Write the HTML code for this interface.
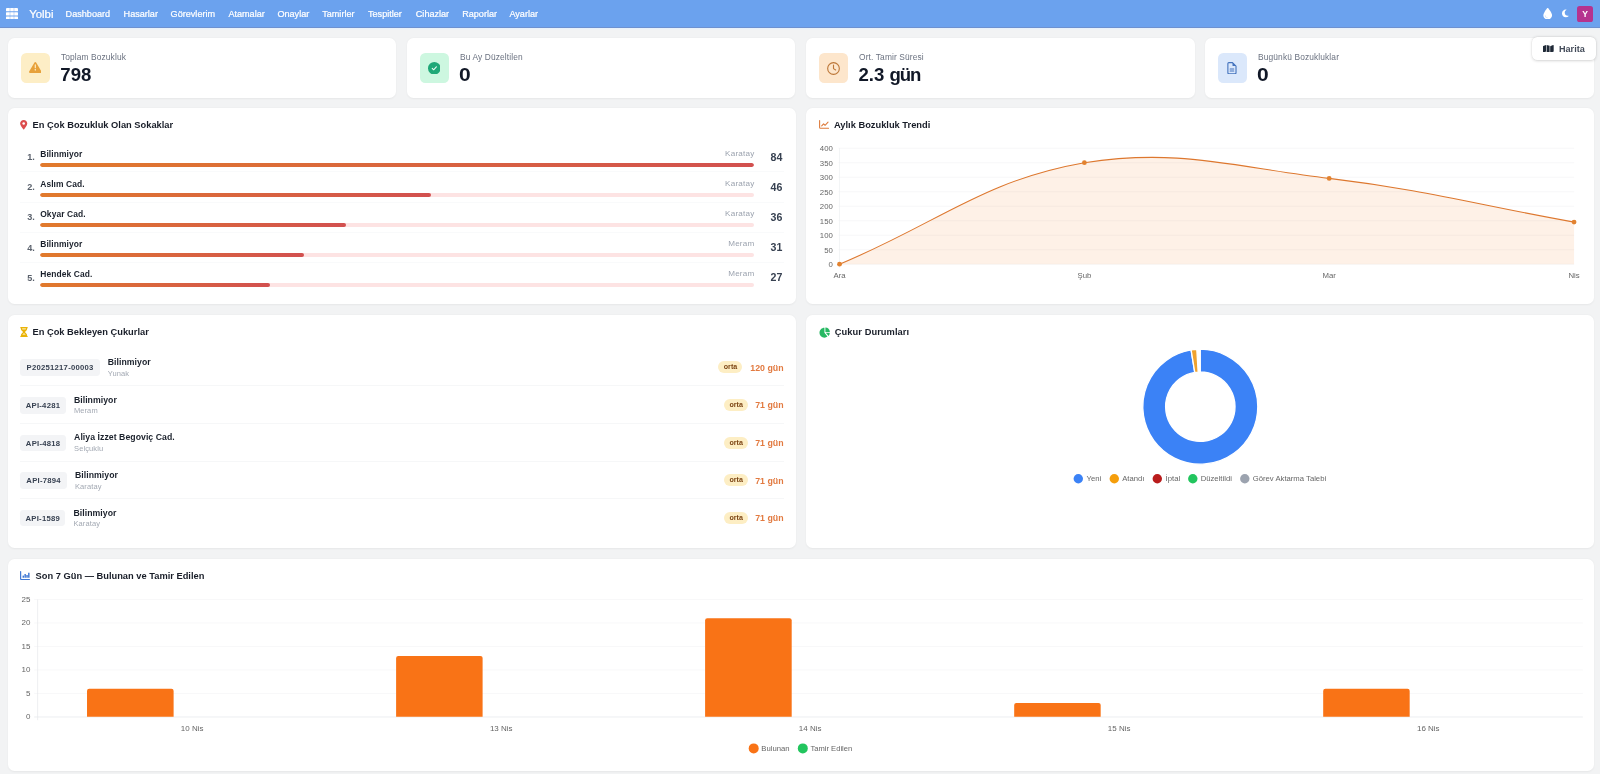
<!DOCTYPE html>
<html lang="tr">
<head>
<meta charset="utf-8">
<title>Yolbi Dashboard</title>
<style>
*{box-sizing:border-box;margin:0;padding:0}
html,body{width:1600px;height:774px;overflow:hidden}
body{background:#f2f3f4;font-family:"Liberation Sans",sans-serif;color:#1f2937;position:relative}
.abs{position:absolute}
/* NAV */
#nav{position:absolute;left:0;top:0;width:1600px;height:28px;background:#6ba2ee;border-bottom:1px solid #6d91d0}
#nav:after{content:'';position:absolute;left:0;top:28px;width:1600px;height:2.4px;background:linear-gradient(#e4f1fd,#f2f3f4)}
#nav .it{-webkit-text-stroke:.22px #fff;position:absolute;top:1px;height:27.5px;line-height:27.5px;color:#fff;font-size:9.1px;white-space:nowrap;letter-spacing:0}
#nav .brand{font-size:11.4px}
/* CARDS */
.card{position:absolute;background:#fff;border-radius:6.7px;box-shadow:0 0.7px 2px rgba(0,0,0,.05)}
.ib{position:absolute;left:12.6px;top:15.4px;width:29.3px;height:29.3px;border-radius:5.3px}
.sl{position:absolute;left:52.9px;top:13.6px;font-size:8.4px;color:#6b7280;white-space:nowrap;letter-spacing:.12px}
.sv{position:absolute;left:52.3px;top:26.3px;font-size:18.6px;font-weight:700;color:#111827;white-space:nowrap;line-height:21px}
.ttl{position:absolute;font-size:9.3px;font-weight:700;color:#181d28;white-space:nowrap;line-height:12px}

.srow{position:absolute;left:12.4px;width:763.2px;height:30.1px;border-bottom:.7px solid #f9fafb}
.srow:last-child{border-bottom:none}
.sn{position:absolute;left:6.9px;top:9.9px;font-size:9.1px;font-weight:700;color:#5a616c;line-height:10px}
.snm{position:absolute;left:19.8px;top:6.7px;font-size:8.45px;font-weight:700;color:#1a202b;line-height:10px;white-space:nowrap;letter-spacing:.1px}
.sd{position:absolute;right:29.2px;top:6.4px;font-size:8.1px;color:#9ca3af;line-height:10px;letter-spacing:.2px}
.sc{position:absolute;right:1.2px;top:8.2px;font-size:10.6px;font-weight:700;color:#374151;line-height:12px}
.trk{position:absolute;left:19.8px;top:20.5px;width:714.2px;height:4px;border-radius:2px;background:#fde3e3;overflow:hidden}
.fil{height:4px;border-radius:2px;background:linear-gradient(90deg,#e17a2c,#d2504f)}

.wrow{position:absolute;left:12.4px;width:763.2px;height:37.65px;border-bottom:.7px solid #f6f7f8}
.wrow:last-child{border-bottom:none}
.wb{position:absolute;left:0;top:10.9px;height:16.4px;line-height:18px;border-radius:3.4px;background:#f3f4f6;color:#374151;font-size:7.7px;font-weight:700;text-align:center;letter-spacing:.25px;white-space:nowrap}
.wn{position:absolute;top:8.6px;font-size:8.7px;font-weight:700;color:#1a202b;line-height:10px;white-space:nowrap;letter-spacing:.05px}
.ws{position:absolute;top:20.1px;font-size:7.5px;color:#a3a9b3;line-height:9px;white-space:nowrap;letter-spacing:.1px}
.wp{position:absolute;top:12.7px;width:24px;height:12.1px;line-height:12.5px;border-radius:6px;background:#fdeec4;color:#7c4514;font-size:7.1px;font-weight:700;text-align:center}
.wd{position:absolute;right:0;top:14px;font-size:8.8px;font-weight:700;color:#e27a40;line-height:11px;white-space:nowrap}
</style>
</head>
<body>
<div id="root" style="position:absolute;left:0;top:0;width:1600px;height:774px;will-change:transform">
<!-- NAV -->
<div id="nav">
  <svg class="abs" style="left:6px;top:7.8px" width="12" height="11.6" viewBox="0 0 12 11.6"><g fill="#fff"><rect x="0" y="0" width="12" height="3.2" rx=".5"/><rect x="0" y="4.2" width="12" height="3.2" rx=".5"/><rect x="0" y="8.4" width="12" height="3.2" rx=".5"/></g><g stroke="#6aa1ed" stroke-width=".7" opacity=".55"><line x1="4" y1="0" x2="4" y2="11.6"/><line x1="8" y1="0" x2="8" y2="11.6"/></g></svg>
  <span class="it brand" style="left:29.2px">Yolbi</span>
  <span class="it" style="left:65.6px">Dashboard</span>
  <span class="it" style="left:123.6px">Hasarlar</span>
  <span class="it" style="left:170.6px">Görevlerim</span>
  <span class="it" style="left:228.4px">Atamalar</span>
  <span class="it" style="left:277.4px">Onaylar</span>
  <span class="it" style="left:322.2px">Tamirler</span>
  <span class="it" style="left:368px">Tespitler</span>
  <span class="it" style="left:415.8px">Cihazlar</span>
  <span class="it" style="left:462.2px">Raporlar</span>
  <span class="it" style="left:509.4px">Ayarlar</span>
  <!-- droplet -->
  <svg class="abs" style="left:1543px;top:7.6px" width="9.4" height="11.6" viewBox="0 0 384 512"><path fill="#fff" d="M192 512C86 512 0 426 0 320C0 228.800 130.200 57.700 166.600 11.700C172.600 4.200 181.500 0 191.100 0h1.800c9.600 0 18.500 4.200 24.500 11.700C253.800 57.700 384 228.800 384 320c0 106-86 192-192 192z"/><path fill="#6aa1ed" opacity=".35" d="M96 336c0-8.800-7.200-16-16-16s-16 7.200-16 16c0 61.900 50.100 112 112 112c8.800 0 16-7.200 16-16s-7.200-16-16-16c-44.200 0-80-35.800-80-80z"/></svg>
  <!-- moon -->
  <svg class="abs" style="left:1561.4px;top:9.4px" width="8.6" height="8.8" viewBox="0 0 384 512"><path fill="#fff" d="M223.500 32C100 32 0 132.300 0 256S100 480 223.500 480c60.600 0 115.500-24.200 155.800-63.400c5-4.900 6.300-12.500 3.100-18.700s-10.100-9.700-17-8.500c-9.800 1.700-19.800 2.600-30.100 2.600c-96.900 0-175.500-78.800-175.500-176c0-65.800 36-123.100 89.300-153.300c6.100-3.500 9.200-10.500 7.700-17.300s-7.300-11.900-14.300-12.500c-6.300-.5-12.600-.8-19-.8z"/></svg>
  <div class="abs" style="left:1577px;top:6px;width:16px;height:16px;border-radius:2.6px;background:#b5338f;color:#fff;font-size:8.6px;font-weight:700;text-align:center;line-height:16.4px">Y</div>
</div>

<!-- STAT CARDS -->
<div class="card" style="left:8px;top:38px;width:388.4px;height:60px">
  <div class="ib" style="background:#fdeec6"></div>
  <svg class="abs" style="left:20.7px;top:24.4px" width="12.6" height="11" viewBox="0 0 512 448"><path fill="#e7a13a" d="M256 0c14.200 0 27.300 7.500 34.500 19.800l216 368c7.300 12.400 7.300 27.700 .2 40.100S486.300 448 472 448H40c-14.300 0-27.600-7.700-34.700-20.100s-7-27.800 .2-40.100l216-368C228.700 7.500 241.800 0 256 0z"/><path fill="#fdeec6" d="M256 96c13.300 0 24 10.700 24 24V232c0 13.300-10.700 24-24 24s-24-10.700-24-24V120c0-13.300 10.700-24 24-24zm32 224a32 32 0 1 1-64 0 32 32 0 1 1 64 0z"/></svg>
  <div class="sl">Toplam Bozukluk</div>
  <div class="sv">798</div>
</div>
<div class="card" style="left:407.1px;top:38px;width:388.4px;height:60px">
  <div class="ib" style="background:#cdf7e0"></div>
  <svg class="abs" style="left:20.6px;top:23.9px" width="12.6" height="12.6" viewBox="0 0 512 512"><circle cx="256" cy="256" r="256" fill="#1fa877"/><path fill="none" stroke="#e9fbf2" stroke-width="44" stroke-linecap="round" stroke-linejoin="round" d="M172 262l56 54 112-122"/></svg>
  <div class="sl">Bu Ay Düzeltilen</div>
  <div class="sv"><span style="display:inline-block;transform:scaleX(1.13);transform-origin:0 50%">0</span></div>
</div>
<div class="card" style="left:806.2px;top:38px;width:388.4px;height:60px">
  <div class="ib" style="background:#fde6cc"></div>
  <svg class="abs" style="left:20.9px;top:23.5px" width="13" height="13" viewBox="0 0 512 512"><circle cx="256" cy="256" r="230" fill="none" stroke="#bd7738" stroke-width="44"/><path fill="none" stroke="#bd7738" stroke-width="44" stroke-linecap="round" stroke-linejoin="round" d="M256 120v140l84 54"/></svg>
  <div class="sl">Ort. Tamir Süresi</div>
  <div class="sv">2.3 <span style="letter-spacing:-1.1px">gün</span></div>
</div>
<div class="card" style="left:1205.2px;top:38px;width:388.4px;height:60px">
  <div class="ib" style="background:#dbe8fb"></div>
  <svg class="abs" style="left:22.3px;top:24px" width="9.9" height="12.4" viewBox="0 0 384 512"><path fill="none" stroke="#4473bd" stroke-width="46" stroke-linejoin="round" d="M64 24h150l146 146v278c0 22-18 40-40 40H64c-22 0-40-18-40-40V64c0-22 18-40 40-40z"/><path fill="#4473bd" d="M214 24l146 146H238c-13 0-24-11-24-24z"/><path fill="none" stroke="#4473bd" stroke-width="42" stroke-linecap="round" d="M116 290h152M116 376h152"/></svg>
  <div class="sl">Bugünkü Bozukluklar</div>
  <div class="sv"><span style="display:inline-block;transform:scaleX(1.13);transform-origin:0 50%">0</span></div>
</div>

<!-- HARITA BUTTON -->
<div class="abs" style="left:1531.8px;top:36.6px;width:64.4px;height:23.6px;background:#fff;border-radius:5.3px;box-shadow:0 0.7px 3px rgba(0,0,0,.16),0 0 0 .5px rgba(0,0,0,.04)">
  <svg class="abs" style="left:11.4px;top:8px" width="10.8" height="7.8" viewBox="0 0 576 416"><path fill="#1f2937" d="M384 412.700V64.600l152.600-61c15.800-6.300 32.900 5.300 32.900 22.300V334.700c0 9.800-6 18.600-15.100 22.300L384 412.700zM15.100 47.300L160 -0.700V347.400L32.900 412.300C17.100 418.600 0 407 0 390V69.600c0-9.800 6-18.600 15.100-22.300zM352 416.600l-160-45.700V-0.600l160 45.700V416.600z"/></svg>
  <span class="abs" style="left:27.2px;top:0;line-height:24.2px;font-size:9.1px;font-weight:700;color:#434b59">Harita</span>
</div>

<!-- ROW 2 LEFT -->
<div class="card" id="p1" style="left:8px;top:108px;width:788.1px;height:196.2px">
  <svg class="abs" style="left:12.2px;top:12.4px" width="7.4" height="9.6" viewBox="0 0 384 512"><path fill="#dc4c4c" d="M215.700 499.200C267 435 384 279.400 384 192C384 86 298 0 192 0S0 86 0 192c0 87.400 117 243 168.300 307.200c12.300 15.300 35.100 15.300 47.400 0z"/><circle cx="192" cy="192" r="68" fill="#fff"/></svg>
  <div class="ttl" style="left:24.6px;top:10.8px">En Çok Bozukluk Olan Sokaklar</div>
  <div class="srow" style="top:34.4px"><span class="sn">1.</span><span class="snm">Bilinmiyor</span><span class="sd">Karatay</span><span class="sc">84</span><div class="trk"><div class="fil" style="width:100.00%"></div></div></div>
  <div class="srow" style="top:64.5px"><span class="sn">2.</span><span class="snm">Aslım Cad.</span><span class="sd">Karatay</span><span class="sc">46</span><div class="trk"><div class="fil" style="width:54.76%"></div></div></div>
  <div class="srow" style="top:94.6px"><span class="sn">3.</span><span class="snm">Okyar Cad.</span><span class="sd">Karatay</span><span class="sc">36</span><div class="trk"><div class="fil" style="width:42.86%"></div></div></div>
  <div class="srow" style="top:124.7px"><span class="sn">4.</span><span class="snm">Bilinmiyor</span><span class="sd">Meram</span><span class="sc">31</span><div class="trk"><div class="fil" style="width:36.90%"></div></div></div>
  <div class="srow" style="top:154.8px"><span class="sn">5.</span><span class="snm">Hendek Cad.</span><span class="sd">Meram</span><span class="sc">27</span><div class="trk"><div class="fil" style="width:32.14%"></div></div></div>
</div>
<!-- ROW 2 RIGHT -->
<div class="card" id="p2" style="left:806.2px;top:108px;width:787.4px;height:196.2px">
  <svg class="abs" style="left:12.9px;top:12.4px" width="10.2" height="8.9" viewBox="0 0 512 448"><path fill="none" stroke="#dd7a3a" stroke-width="54" stroke-linecap="round" stroke-linejoin="round" d="M30 30v350c0 22 18 38 40 38h412"/><path fill="none" stroke="#dd7a3a" stroke-width="54" stroke-linecap="round" stroke-linejoin="round" d="M135 300l95-105 75 70 150-160"/></svg>
  <div class="ttl" style="left:27.8px;top:10.8px">Aylık Bozukluk Trendi</div>
  <svg class="abs" style="left:0;top:0" width="787.4" height="196.2" viewBox="806.2 108 787.4 196.2" font-family="Liberation Sans, sans-serif" font-size="7.8" fill="#666">
    <g stroke="#f3f4f6" stroke-width=".7"><line x1="838.7" y1="264.2" x2="1574.3" y2="264.2"/><line x1="838.7" y1="249.7" x2="1574.3" y2="249.7"/><line x1="838.7" y1="235.2" x2="1574.3" y2="235.2"/><line x1="838.7" y1="220.7" x2="1574.3" y2="220.7"/><line x1="838.7" y1="206.2" x2="1574.3" y2="206.2"/><line x1="838.7" y1="191.7" x2="1574.3" y2="191.7"/><line x1="838.7" y1="177.2" x2="1574.3" y2="177.2"/><line x1="838.7" y1="162.7" x2="1574.3" y2="162.7"/><line x1="838.7" y1="148.2" x2="1574.3" y2="148.2"/></g>
    <g stroke="#eef0f2" stroke-width=".7"><line x1="839.7" y1="148.2" x2="839.7" y2="267.6"/></g>
    <path d="M839.7,264.2 C937.6,223.6 982.8,180.5 1084.6,162.7 C1178.7,148.2 1232.2,166.6 1329.4,178.4 C1428.1,190.3 1476.4,204.6 1574.3,222.1 L1574.3,264.2 L839.7,264.2 Z" fill="#f97316" fill-opacity=".1"/>
    <path d="M839.7,264.2 C937.6,223.6 982.8,180.5 1084.6,162.7 C1178.7,148.2 1232.2,166.6 1329.4,178.4 C1428.1,190.3 1476.4,204.6 1574.3,222.1" fill="none" stroke="#dd772e" stroke-width="1.1"/>
    <g fill="#e2822f"><circle cx="839.7" cy="264.2" r="2.4"/><circle cx="1084.6" cy="162.7" r="2.4"/><circle cx="1329.4" cy="178.4" r="2.4"/><circle cx="1574.3" cy="222.1" r="2.4"/></g>
    <text x="833" y="267.1" text-anchor="end">0</text><text x="833" y="252.6" text-anchor="end">50</text><text x="833" y="238.1" text-anchor="end">100</text><text x="833" y="223.6" text-anchor="end">150</text><text x="833" y="209.1" text-anchor="end">200</text><text x="833" y="194.6" text-anchor="end">250</text><text x="833" y="180.1" text-anchor="end">300</text><text x="833" y="165.6" text-anchor="end">350</text><text x="833" y="151.1" text-anchor="end">400</text>
    <text x="839.7" y="278.2" text-anchor="middle">Ara</text><text x="1084.6" y="278.2" text-anchor="middle">Şub</text><text x="1329.4" y="278.2" text-anchor="middle">Mar</text><text x="1574.3" y="278.2" text-anchor="middle">Nis</text>
  </svg>
</div>
<!-- ROW 3 LEFT -->
<div class="card" id="p3" style="left:8px;top:315.4px;width:788.1px;height:232.8px">
  <svg class="abs" style="left:11.8px;top:11.6px" width="8" height="10.2" viewBox="0 0 384 512"><path fill="#eab308" d="M32 0C14.300 0 0 14.300 0 32S14.300 64 32 64V75c0 42.400 16.900 83.100 46.900 113.100L146.700 256 78.900 323.900C48.900 353.900 32 394.600 32 437v11c-17.700 0-32 14.300-32 32s14.300 32 32 32H352c17.700 0 32-14.300 32-32s-14.300-32-32-32V437c0-42.400-16.900-83.100-46.900-113.100L237.300 256l67.900-67.900c30-30 46.900-70.700 46.900-113.100V64c17.700 0 32-14.300 32-32s-14.300-32-32-32H32z"/><path fill="#fdf3c4" d="M96 75V64H288V75c0 19-5.600 37.400-16 53H112c-10.300-15.600-16-34-16-53zm16 309c3.500-5.300 7.600-10.300 12.100-14.900L192 301.300l67.900 67.900c4.600 4.600 8.600 9.600 12.100 14.900H112z" opacity=".85"/></svg>
  <div class="ttl" style="left:24.5px;top:10.6px">En Çok Bekleyen Çukurlar</div>
  <div class="wrow" style="top:33.20px"><span class="wb" style="width:79.4px">P20251217-00003</span><span class="wn" style="left:87.3px">Bilinmiyor</span><span class="ws" style="left:87.3px">Yunak</span><span class="wp" style="left:698.1px">orta</span><span class="wd">120 gün</span></div>
  <div class="wrow" style="top:70.85px"><span class="wb" style="width:45.2px">API-4281</span><span class="wn" style="left:53.5px">Bilinmiyor</span><span class="ws" style="left:53.5px">Meram</span><span class="wp" style="left:703.8px">orta</span><span class="wd">71 gün</span></div>
  <div class="wrow" style="top:108.50px"><span class="wb" style="width:45.4px">API-4818</span><span class="wn" style="left:53.7px">Aliya İzzet Begoviç Cad.</span><span class="ws" style="left:53.7px">Selçuklu</span><span class="wp" style="left:703.8px">orta</span><span class="wd">71 gün</span></div>
  <div class="wrow" style="top:146.15px"><span class="wb" style="width:46.4px">API-7894</span><span class="wn" style="left:54.6px">Bilinmiyor</span><span class="ws" style="left:54.6px">Karatay</span><span class="wp" style="left:703.8px">orta</span><span class="wd">71 gün</span></div>
  <div class="wrow" style="top:183.80px"><span class="wb" style="width:44.8px">API-1589</span><span class="wn" style="left:53.1px">Bilinmiyor</span><span class="ws" style="left:53.1px">Karatay</span><span class="wp" style="left:703.8px">orta</span><span class="wd">71 gün</span></div>
</div>
<!-- ROW 3 RIGHT -->
<div class="card" id="p4" style="left:806.2px;top:315.4px;width:787.4px;height:232.8px">
  <svg class="abs" style="left:12.6px;top:11.4px" width="11.2" height="11.2" viewBox="0 0 576 576"><path fill="#26b862" d="M280 40C140 40 26 154 26 294s114 254 254 254c60 0 115-21 158-55L280 294V40z"/><path fill="#26b862" d="M328 20v232h232C560 124 456 20 328 20z"/><path fill="#26b862" d="M350 300h206c0 62-24 118-63 160L350 300z"/></svg>
  <div class="ttl" style="left:28.6px;top:10.6px;letter-spacing:.07px">Çukur Durumları</div>
  <svg class="abs" style="left:0;top:0" width="787.4" height="232.8" viewBox="806.2 315.4 787.4 232.8" font-family="Liberation Sans, sans-serif" font-size="7.7" fill="#666">
    <g stroke="#fff" stroke-width="1.33" stroke-linejoin="round">
      <path d="M1200.50,349.60 A57.5,57.5 0 1 1 1191.31,350.34 L1194.95,372.85 A34.7,34.7 0 1 0 1200.50,372.40 Z" fill="#3b82f6"/>
      <path d="M1191.31,350.34 A57.5,57.5 0 0 1 1196.99,349.71 L1198.38,372.46 A34.7,34.7 0 0 0 1194.95,372.85 Z" fill="#f0a22e"/>
    </g>
    <circle cx="1078.5" cy="479.2" r="4.7" fill="#3b82f6"/><text x="1086.8" y="481.8">Yeni</text><circle cx="1114.5" cy="479.2" r="4.7" fill="#f59e0b"/><text x="1122.4" y="481.8">Atandı</text><circle cx="1157.5" cy="479.2" r="4.7" fill="#b91c1c"/><text x="1165.8" y="481.8">İptal</text><circle cx="1193" cy="479.2" r="4.7" fill="#22c55e"/><text x="1200.9" y="481.8">Düzeltildi</text><circle cx="1245" cy="479.2" r="4.7" fill="#9ca3af"/><text x="1253" y="481.8">Görev Aktarma Talebi</text>
  </svg>
</div>
<!-- ROW 4 -->
<div class="card" id="p5" style="left:8px;top:559.2px;width:1585.6px;height:211.6px">
  <svg class="abs" style="left:12px;top:11.9px" width="10" height="9.2" viewBox="0 0 512 470"><path fill="none" stroke="#3d76d3" stroke-width="60" stroke-linecap="round" stroke-linejoin="round" d="M32 30v370c0 22 18 38 40 38h410"/><g stroke="#3d76d3" stroke-width="74" stroke-linecap="butt"><line x1="168" y1="345" x2="168" y2="235"/><line x1="264" y1="345" x2="264" y2="150"/><line x1="360" y1="345" x2="360" y2="205"/><line x1="452" y1="345" x2="452" y2="90"/></g></svg>
  <div class="ttl" style="left:27.6px;top:10.6px">Son 7 Gün — Bulunan ve Tamir Edilen</div>
  <svg class="abs" style="left:0;top:0" width="1585.6" height="211.6" viewBox="8 559.2 1585.6 211.6" font-family="Liberation Sans, sans-serif" font-size="8" fill="#666">
    <g stroke-width=".7"><line x1="34.2" y1="717.2" x2="1582.8" y2="717.2" stroke="#e2e5e9"/><line x1="34.2" y1="693.7" x2="1582.8" y2="693.7" stroke="#f3f4f6"/><line x1="34.2" y1="670.2" x2="1582.8" y2="670.2" stroke="#f3f4f6"/><line x1="34.2" y1="646.7" x2="1582.8" y2="646.7" stroke="#f3f4f6"/><line x1="34.2" y1="623.2" x2="1582.8" y2="623.2" stroke="#f3f4f6"/><line x1="34.2" y1="599.7" x2="1582.8" y2="599.7" stroke="#f3f4f6"/><line x1="37.6" y1="599.7" x2="37.6" y2="720.4" stroke="#e6e8eb"/></g>
    <g fill="#f97316"><path d="M87.0,716.9000000000001 V691.2 Q87.0,689.0 89.2,689.0 H171.4 Q173.6,689.0 173.6,691.2 V716.9000000000001 Z"/><path d="M396.1,716.9000000000001 V658.3 Q396.1,656.1 398.3,656.1 H480.4 Q482.6,656.1 482.6,658.3 V716.9000000000001 Z"/><path d="M705.1,716.9000000000001 V620.7 Q705.1,618.5 707.3,618.5 H789.5 Q791.7,618.5 791.7,620.7 V716.9000000000001 Z"/><path d="M1014.2,716.9000000000001 V705.3 Q1014.2,703.1 1016.4,703.1 H1098.5 Q1100.7,703.1 1100.7,705.3 V716.9000000000001 Z"/><path d="M1323.2,716.9000000000001 V691.2 Q1323.2,689.0 1325.4,689.0 H1407.5 Q1409.7,689.0 1409.7,691.2 V716.9000000000001 Z"/></g>
    <text x="30.4" y="719.5" text-anchor="end">0</text><text x="30.4" y="696.0" text-anchor="end">5</text><text x="30.4" y="672.5" text-anchor="end">10</text><text x="30.4" y="649.0" text-anchor="end">15</text><text x="30.4" y="625.5" text-anchor="end">20</text><text x="30.4" y="602.0" text-anchor="end">25</text><text x="192.1" y="730.9" text-anchor="middle">10 Nis</text><text x="501.2" y="730.9" text-anchor="middle">13 Nis</text><text x="810.2" y="730.9" text-anchor="middle">14 Nis</text><text x="1119.2" y="730.9" text-anchor="middle">15 Nis</text><text x="1428.3" y="730.9" text-anchor="middle">16 Nis</text>
    <circle cx="753.7" cy="748.6" r="5" fill="#f97316"/><text x="761.3" y="751.5" font-size="7.7">Bulunan</text>
    <circle cx="802.8" cy="748.6" r="5" fill="#22c55e"/><text x="810.5" y="751.5" font-size="7.6">Tamir Edilen</text>
  </svg>
</div>
</div>
</body>
</html>
